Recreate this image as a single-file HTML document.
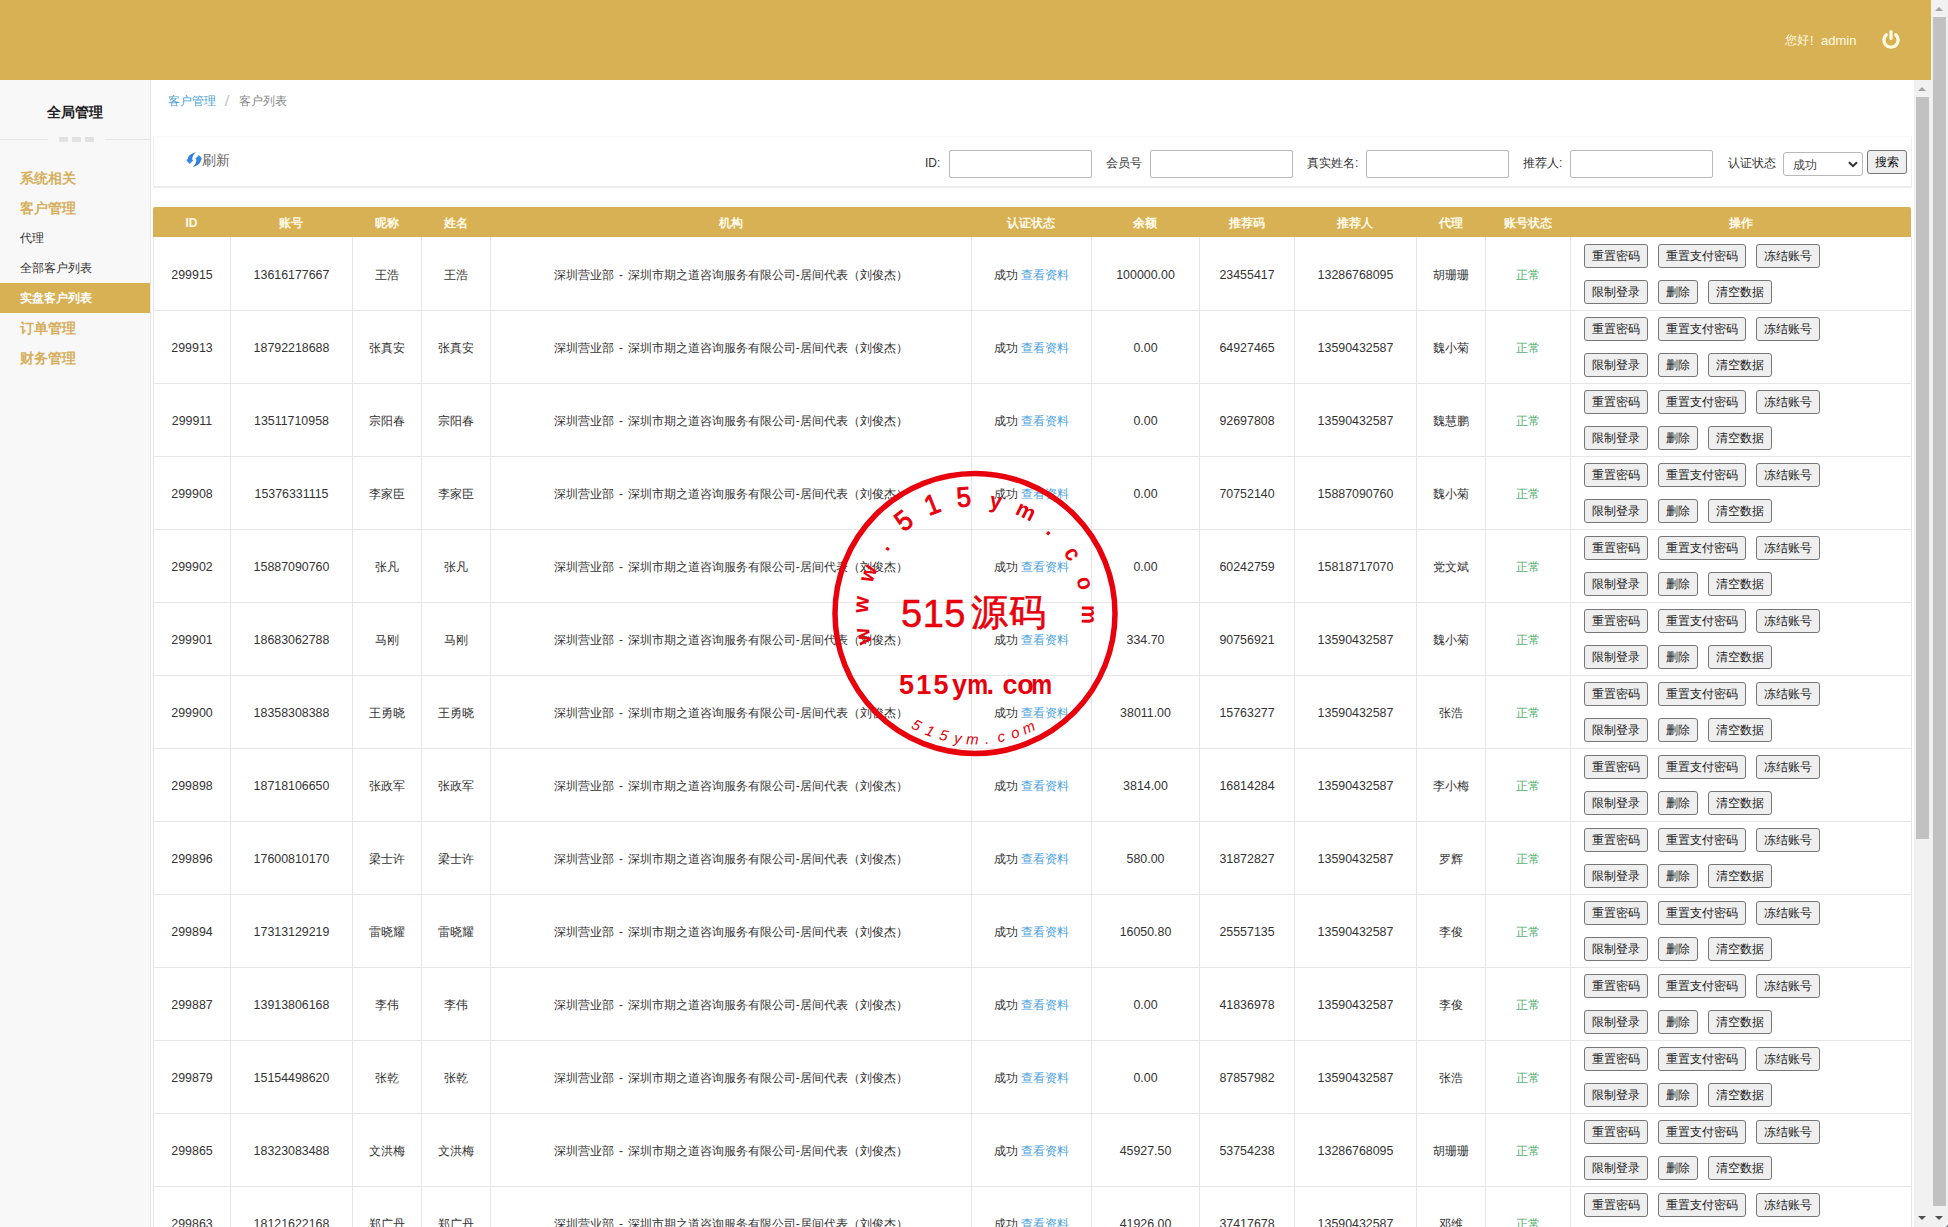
<!DOCTYPE html><html><head><meta charset="utf-8"><title>客户列表</title><style>
*{box-sizing:border-box}
html,body{margin:0;padding:0}
body{width:1948px;height:1227px;overflow:hidden;position:relative;background:#fff;font-family:"Liberation Sans",sans-serif;font-size:12px;color:#333}
#topbar{position:absolute;left:0;top:0;width:1931px;height:80px;background:#d9b155}
#topbar .hello{position:absolute;top:32px;font-size:12px;line-height:16px;color:#fffae0;white-space:nowrap}
#topbar .power{position:absolute;left:1881px;top:30px}
#side{position:absolute;left:0;top:80px;width:151px;height:1147px;background:#f8f8f8;border-right:1px solid #e6e6e6}
.stitle{position:absolute;left:0;top:23px;width:150px;text-align:center;font-size:14px;font-weight:bold;color:#222;line-height:18px}
.sdiv{position:absolute;left:0;top:56px;width:150px;height:6px}
.sdiv i{position:absolute;top:3px;height:1px;background:#e6e6e6}
.sdiv b{position:absolute;top:1px;width:9px;height:5px;background:#e2e2e2}
.mi{position:absolute;left:20px;line-height:30px;height:30px;white-space:nowrap}
.mi.g{color:#d6b060;font-size:14px;font-weight:bold}
.mi.s{color:#333;font-size:12px}
.mi.act{left:0;width:150px;padding-left:20px;background:#d9b155;color:#fff;font-size:12px;font-weight:bold}
#crumb{position:absolute;left:168px;top:93px;line-height:16px;font-size:12px;white-space:nowrap}
#crumb a{color:#4a9fd8}
#crumb .sep{color:#c8c8c8;margin:0 10px 0 9px;font-size:14px;line-height:16px;display:inline-block;vertical-align:top;transform:scaleX(1.3)}
#crumb .cur{color:#888}
#panel{position:absolute;left:153px;top:136px;width:1759px;height:52px;background:#fff;border:1px solid #f0f0f0;border-top-color:#fafafa;border-bottom:2px solid #ececec}
.rficon{position:absolute;left:32px;top:15px}
.rftext{position:absolute;left:48px;top:14px;white-space:nowrap;color:#666;font-size:14px;line-height:18px}
.lbl{position:absolute;top:18px;font-size:12px;line-height:16px;color:#333;white-space:nowrap}
.inp{position:absolute;top:13px;width:143px;height:28px;border:1px solid #b9b9b9;border-radius:2px;background:#fff}
.sel{position:absolute;left:1629px;top:15px;width:80px;height:24px;border:1px solid #b9b9b9;border-radius:3px;background:#fff}
.sel span{position:absolute;left:9px;top:4px;font-size:12px;line-height:16px;color:#444}
.sel svg{position:absolute;left:64px;top:8px}
.sbtn{position:absolute;left:1713px;top:13px;width:40px;height:24px;border:1px solid #767676;border-radius:3px;background:#efefef;font-size:12px;line-height:22px;text-align:center;color:#111}
#thead{position:absolute;background:#d9b155;border-radius:2px 2px 0 0}
.th{position:absolute;top:1px;height:30px;line-height:30px;text-align:center;color:#fffbe8;font-weight:bold;font-size:12px}
.vl{position:absolute;width:1px;background:#e6e6e6}
.hl{position:absolute;height:1px;background:#e6e6e6}
.row{position:absolute;left:0;width:1948px;height:72px}
.td{position:absolute;top:2px;height:72px;line-height:72px;text-align:center;white-space:nowrap;font-size:12px;color:#333}
.td.num{font-size:12.4px}
.td.org{word-spacing:1.5px}
.lk{color:#4aa3df}
.ok{color:#50b070}
.ops{position:absolute;top:0;width:340px;height:72px;padding-left:13px}
.ops .b1,.ops .b2{position:absolute;left:13px;height:24px;white-space:nowrap;font-size:0}
.ops .b1{top:7px}
.ops .b2{top:43px}
.btn{display:inline-block;height:24px;padding:0 7px;margin-right:10px;border:1px solid #767676;border-radius:3px;background:#efefef;font-size:12px;line-height:22px;color:#222;vertical-align:top}
#sb-inner{position:absolute;left:1914px;top:80px;width:17px;height:1147px;background:#f1f1f1}
#sb-outer{position:absolute;left:1931px;top:0;width:17px;height:1227px;background:#f1f1f1}
#hdrline{position:absolute;left:1931px;top:0;width:1px;height:80px;background:#fff3dc;z-index:2}
.thumb{position:absolute;left:2px;width:13px;background:#c1c1c1}
#sb-outer .thumb{left:2px}
.up{position:absolute;left:4px;top:7px;width:0;height:0;border-left:4px solid transparent;border-right:4px solid transparent;border-bottom:4px solid #a3a3a3}
.dn{position:absolute;left:4px;bottom:7px;width:0;height:0;border-left:4px solid transparent;border-right:4px solid transparent;border-top:4px solid #505050}
#stamp{position:absolute;left:0;top:0;pointer-events:none}
#corner{position:absolute;left:9px;top:1219px;width:8px;height:8px;background:#7a8790}
#corner i{position:absolute;left:0;top:0;width:8px;height:8px;background:#f1f1f1;border-bottom-right-radius:8px;box-shadow:1px 1px 0 #fff}

</style></head><body>
<div id="topbar"><span class="hello" style="left:1785px">您好</span><span class="hello" style="left:1810px;top:33px;font-size:13px">!</span><span class="hello" style="left:1821px;top:33px;font-size:13px">admin</span><svg class="power" width="20" height="20" viewBox="0 0 20 20"><path d="M5.3 4.8 A7.1 7.1 0 1 0 14.7 4.8" fill="none" stroke="#fffbe2" stroke-width="3.3" stroke-linecap="round"/><line x1="10" y1="1.6" x2="10" y2="8.4" stroke="#fffbe2" stroke-width="3.2" stroke-linecap="round"/></svg></div>
<div id="side"><div class="stitle">全局管理</div><div class="sdiv"><i style="left:0;width:48px"></i><b style="left:59px"></b><b style="left:72px"></b><b style="left:85px"></b><i style="left:105px;width:45px"></i></div><div class="mi g" style="top:83px">系统相关</div><div class="mi g" style="top:113px">客户管理</div><div class="mi s" style="top:143px">代理</div><div class="mi s" style="top:173px">全部客户列表</div><div class="mi act" style="top:203px">实盘客户列表</div><div class="mi g" style="top:233px">订单管理</div><div class="mi g" style="top:263px">财务管理</div></div>
<div id="crumb"><a>客户管理</a><span class="sep">/</span><span class="cur">客户列表</span></div>
<div id="panel"><svg class="rficon" width="17" height="16" viewBox="-0.3 0 17 16"><defs><linearGradient id="rg" x1="0" y1="0" x2="0" y2="1"><stop offset="0" stop-color="#2a6fd8"/><stop offset="1" stop-color="#3b8ff0"/></linearGradient></defs><path d="M9.7 0.2 C5.5 1.0 1.6 3.6 1.2 7.6 L-0.1 8.1 L3.4 11.9 L7.0 8.3 L5.9 7.6 C5.8 4.6 7.2 2.0 9.7 0.2 Z" fill="url(#rg)"/><path d="M9.7 0.2 C5.5 1.0 1.6 3.6 1.2 7.6 L-0.1 8.1 L3.4 11.9 L7.0 8.3 L5.9 7.6 C5.8 4.6 7.2 2.0 9.7 0.2 Z" fill="url(#rg)" transform="rotate(180 8 7.5)"/></svg><span class="rftext">刷新</span><span class="lbl" style="left:771px">ID:</span><div class="inp" style="left:795px"></div><span class="lbl" style="left:952px">会员号</span><div class="inp" style="left:996px"></div><span class="lbl" style="left:1153px">真实姓名:</span><div class="inp" style="left:1212px"></div><span class="lbl" style="left:1369px">推荐人:</span><div class="inp" style="left:1416px"></div><span class="lbl" style="left:1574px">认证状态</span><div class="sel"><span>成功</span><svg width="10" height="7" viewBox="0 0 10 7"><path d="M1 1.2 L5 5.2 L9 1.2" fill="none" stroke="#333" stroke-width="2"/></svg></div><div class="sbtn">搜索</div></div>
<div id="thead" style="left:153px;top:207px;width:1758px;height:30px">
<div class="th" style="left:0px;width:77px">ID</div>
<div class="th" style="left:77px;width:122px">账号</div>
<div class="th" style="left:199px;width:69px">昵称</div>
<div class="th" style="left:268px;width:69px">姓名</div>
<div class="th" style="left:337px;width:481px">机构</div>
<div class="th" style="left:818px;width:120px">认证状态</div>
<div class="th" style="left:938px;width:108px">余额</div>
<div class="th" style="left:1046px;width:95px">推荐码</div>
<div class="th" style="left:1141px;width:122px">推荐人</div>
<div class="th" style="left:1263px;width:69px">代理</div>
<div class="th" style="left:1332px;width:85px">账号状态</div>
<div class="th" style="left:1417px;width:341px">操作</div>
</div>
<div class="vl" style="left:153px;top:237px;height:990px"></div><div class="vl" style="left:230px;top:237px;height:990px"></div><div class="vl" style="left:352px;top:237px;height:990px"></div><div class="vl" style="left:421px;top:237px;height:990px"></div><div class="vl" style="left:490px;top:237px;height:990px"></div><div class="vl" style="left:971px;top:237px;height:990px"></div><div class="vl" style="left:1091px;top:237px;height:990px"></div><div class="vl" style="left:1199px;top:237px;height:990px"></div><div class="vl" style="left:1294px;top:237px;height:990px"></div><div class="vl" style="left:1416px;top:237px;height:990px"></div><div class="vl" style="left:1485px;top:237px;height:990px"></div><div class="vl" style="left:1570px;top:237px;height:990px"></div><div class="vl" style="left:1911px;top:237px;height:990px"></div><div class="hl" style="left:153px;top:310px;width:1759px"></div><div class="hl" style="left:153px;top:383px;width:1759px"></div><div class="hl" style="left:153px;top:456px;width:1759px"></div><div class="hl" style="left:153px;top:529px;width:1759px"></div><div class="hl" style="left:153px;top:602px;width:1759px"></div><div class="hl" style="left:153px;top:675px;width:1759px"></div><div class="hl" style="left:153px;top:748px;width:1759px"></div><div class="hl" style="left:153px;top:821px;width:1759px"></div><div class="hl" style="left:153px;top:894px;width:1759px"></div><div class="hl" style="left:153px;top:967px;width:1759px"></div><div class="hl" style="left:153px;top:1040px;width:1759px"></div><div class="hl" style="left:153px;top:1113px;width:1759px"></div><div class="hl" style="left:153px;top:1186px;width:1759px"></div>
<div class="row" style="top:237px">
<div class="td num" style="left:154px;width:76px">299915</div>
<div class="td num" style="left:231px;width:121px">13616177667</div>
<div class="td" style="left:353px;width:68px">王浩</div>
<div class="td" style="left:422px;width:68px">王浩</div>
<div class="td org" style="left:491px;width:480px">深圳营业部 - 深圳市期之道咨询服务有限公司-居间代表（刘俊杰）</div>
<div class="td" style="left:972px;width:119px">成功 <a class="lk">查看资料</a></div>
<div class="td num" style="left:1092px;width:107px">100000.00</div>
<div class="td num" style="left:1200px;width:94px">23455417</div>
<div class="td num" style="left:1295px;width:121px">13286768095</div>
<div class="td" style="left:1417px;width:68px">胡珊珊</div>
<div class="td" style="left:1486px;width:84px"><span class="ok">正常</span></div>
<div class="ops" style="left:1571px"><div class="b1"><span class="btn">重置密码</span><span class="btn">重置支付密码</span><span class="btn">冻结账号</span></div><div class="b2"><span class="btn">限制登录</span><span class="btn">删除</span><span class="btn">清空数据</span></div></div>
</div>
<div class="row" style="top:310px">
<div class="td num" style="left:154px;width:76px">299913</div>
<div class="td num" style="left:231px;width:121px">18792218688</div>
<div class="td" style="left:353px;width:68px">张真安</div>
<div class="td" style="left:422px;width:68px">张真安</div>
<div class="td org" style="left:491px;width:480px">深圳营业部 - 深圳市期之道咨询服务有限公司-居间代表（刘俊杰）</div>
<div class="td" style="left:972px;width:119px">成功 <a class="lk">查看资料</a></div>
<div class="td num" style="left:1092px;width:107px">0.00</div>
<div class="td num" style="left:1200px;width:94px">64927465</div>
<div class="td num" style="left:1295px;width:121px">13590432587</div>
<div class="td" style="left:1417px;width:68px">魏小菊</div>
<div class="td" style="left:1486px;width:84px"><span class="ok">正常</span></div>
<div class="ops" style="left:1571px"><div class="b1"><span class="btn">重置密码</span><span class="btn">重置支付密码</span><span class="btn">冻结账号</span></div><div class="b2"><span class="btn">限制登录</span><span class="btn">删除</span><span class="btn">清空数据</span></div></div>
</div>
<div class="row" style="top:383px">
<div class="td num" style="left:154px;width:76px">299911</div>
<div class="td num" style="left:231px;width:121px">13511710958</div>
<div class="td" style="left:353px;width:68px">宗阳春</div>
<div class="td" style="left:422px;width:68px">宗阳春</div>
<div class="td org" style="left:491px;width:480px">深圳营业部 - 深圳市期之道咨询服务有限公司-居间代表（刘俊杰）</div>
<div class="td" style="left:972px;width:119px">成功 <a class="lk">查看资料</a></div>
<div class="td num" style="left:1092px;width:107px">0.00</div>
<div class="td num" style="left:1200px;width:94px">92697808</div>
<div class="td num" style="left:1295px;width:121px">13590432587</div>
<div class="td" style="left:1417px;width:68px">魏慧鹏</div>
<div class="td" style="left:1486px;width:84px"><span class="ok">正常</span></div>
<div class="ops" style="left:1571px"><div class="b1"><span class="btn">重置密码</span><span class="btn">重置支付密码</span><span class="btn">冻结账号</span></div><div class="b2"><span class="btn">限制登录</span><span class="btn">删除</span><span class="btn">清空数据</span></div></div>
</div>
<div class="row" style="top:456px">
<div class="td num" style="left:154px;width:76px">299908</div>
<div class="td num" style="left:231px;width:121px">15376331115</div>
<div class="td" style="left:353px;width:68px">李家臣</div>
<div class="td" style="left:422px;width:68px">李家臣</div>
<div class="td org" style="left:491px;width:480px">深圳营业部 - 深圳市期之道咨询服务有限公司-居间代表（刘俊杰）</div>
<div class="td" style="left:972px;width:119px">成功 <a class="lk">查看资料</a></div>
<div class="td num" style="left:1092px;width:107px">0.00</div>
<div class="td num" style="left:1200px;width:94px">70752140</div>
<div class="td num" style="left:1295px;width:121px">15887090760</div>
<div class="td" style="left:1417px;width:68px">魏小菊</div>
<div class="td" style="left:1486px;width:84px"><span class="ok">正常</span></div>
<div class="ops" style="left:1571px"><div class="b1"><span class="btn">重置密码</span><span class="btn">重置支付密码</span><span class="btn">冻结账号</span></div><div class="b2"><span class="btn">限制登录</span><span class="btn">删除</span><span class="btn">清空数据</span></div></div>
</div>
<div class="row" style="top:529px">
<div class="td num" style="left:154px;width:76px">299902</div>
<div class="td num" style="left:231px;width:121px">15887090760</div>
<div class="td" style="left:353px;width:68px">张凡</div>
<div class="td" style="left:422px;width:68px">张凡</div>
<div class="td org" style="left:491px;width:480px">深圳营业部 - 深圳市期之道咨询服务有限公司-居间代表（刘俊杰）</div>
<div class="td" style="left:972px;width:119px">成功 <a class="lk">查看资料</a></div>
<div class="td num" style="left:1092px;width:107px">0.00</div>
<div class="td num" style="left:1200px;width:94px">60242759</div>
<div class="td num" style="left:1295px;width:121px">15818717070</div>
<div class="td" style="left:1417px;width:68px">党文斌</div>
<div class="td" style="left:1486px;width:84px"><span class="ok">正常</span></div>
<div class="ops" style="left:1571px"><div class="b1"><span class="btn">重置密码</span><span class="btn">重置支付密码</span><span class="btn">冻结账号</span></div><div class="b2"><span class="btn">限制登录</span><span class="btn">删除</span><span class="btn">清空数据</span></div></div>
</div>
<div class="row" style="top:602px">
<div class="td num" style="left:154px;width:76px">299901</div>
<div class="td num" style="left:231px;width:121px">18683062788</div>
<div class="td" style="left:353px;width:68px">马刚</div>
<div class="td" style="left:422px;width:68px">马刚</div>
<div class="td org" style="left:491px;width:480px">深圳营业部 - 深圳市期之道咨询服务有限公司-居间代表（刘俊杰）</div>
<div class="td" style="left:972px;width:119px">成功 <a class="lk">查看资料</a></div>
<div class="td num" style="left:1092px;width:107px">334.70</div>
<div class="td num" style="left:1200px;width:94px">90756921</div>
<div class="td num" style="left:1295px;width:121px">13590432587</div>
<div class="td" style="left:1417px;width:68px">魏小菊</div>
<div class="td" style="left:1486px;width:84px"><span class="ok">正常</span></div>
<div class="ops" style="left:1571px"><div class="b1"><span class="btn">重置密码</span><span class="btn">重置支付密码</span><span class="btn">冻结账号</span></div><div class="b2"><span class="btn">限制登录</span><span class="btn">删除</span><span class="btn">清空数据</span></div></div>
</div>
<div class="row" style="top:675px">
<div class="td num" style="left:154px;width:76px">299900</div>
<div class="td num" style="left:231px;width:121px">18358308388</div>
<div class="td" style="left:353px;width:68px">王勇晓</div>
<div class="td" style="left:422px;width:68px">王勇晓</div>
<div class="td org" style="left:491px;width:480px">深圳营业部 - 深圳市期之道咨询服务有限公司-居间代表（刘俊杰）</div>
<div class="td" style="left:972px;width:119px">成功 <a class="lk">查看资料</a></div>
<div class="td num" style="left:1092px;width:107px">38011.00</div>
<div class="td num" style="left:1200px;width:94px">15763277</div>
<div class="td num" style="left:1295px;width:121px">13590432587</div>
<div class="td" style="left:1417px;width:68px">张浩</div>
<div class="td" style="left:1486px;width:84px"><span class="ok">正常</span></div>
<div class="ops" style="left:1571px"><div class="b1"><span class="btn">重置密码</span><span class="btn">重置支付密码</span><span class="btn">冻结账号</span></div><div class="b2"><span class="btn">限制登录</span><span class="btn">删除</span><span class="btn">清空数据</span></div></div>
</div>
<div class="row" style="top:748px">
<div class="td num" style="left:154px;width:76px">299898</div>
<div class="td num" style="left:231px;width:121px">18718106650</div>
<div class="td" style="left:353px;width:68px">张政军</div>
<div class="td" style="left:422px;width:68px">张政军</div>
<div class="td org" style="left:491px;width:480px">深圳营业部 - 深圳市期之道咨询服务有限公司-居间代表（刘俊杰）</div>
<div class="td" style="left:972px;width:119px">成功 <a class="lk">查看资料</a></div>
<div class="td num" style="left:1092px;width:107px">3814.00</div>
<div class="td num" style="left:1200px;width:94px">16814284</div>
<div class="td num" style="left:1295px;width:121px">13590432587</div>
<div class="td" style="left:1417px;width:68px">李小梅</div>
<div class="td" style="left:1486px;width:84px"><span class="ok">正常</span></div>
<div class="ops" style="left:1571px"><div class="b1"><span class="btn">重置密码</span><span class="btn">重置支付密码</span><span class="btn">冻结账号</span></div><div class="b2"><span class="btn">限制登录</span><span class="btn">删除</span><span class="btn">清空数据</span></div></div>
</div>
<div class="row" style="top:821px">
<div class="td num" style="left:154px;width:76px">299896</div>
<div class="td num" style="left:231px;width:121px">17600810170</div>
<div class="td" style="left:353px;width:68px">梁士许</div>
<div class="td" style="left:422px;width:68px">梁士许</div>
<div class="td org" style="left:491px;width:480px">深圳营业部 - 深圳市期之道咨询服务有限公司-居间代表（刘俊杰）</div>
<div class="td" style="left:972px;width:119px">成功 <a class="lk">查看资料</a></div>
<div class="td num" style="left:1092px;width:107px">580.00</div>
<div class="td num" style="left:1200px;width:94px">31872827</div>
<div class="td num" style="left:1295px;width:121px">13590432587</div>
<div class="td" style="left:1417px;width:68px">罗辉</div>
<div class="td" style="left:1486px;width:84px"><span class="ok">正常</span></div>
<div class="ops" style="left:1571px"><div class="b1"><span class="btn">重置密码</span><span class="btn">重置支付密码</span><span class="btn">冻结账号</span></div><div class="b2"><span class="btn">限制登录</span><span class="btn">删除</span><span class="btn">清空数据</span></div></div>
</div>
<div class="row" style="top:894px">
<div class="td num" style="left:154px;width:76px">299894</div>
<div class="td num" style="left:231px;width:121px">17313129219</div>
<div class="td" style="left:353px;width:68px">雷晓耀</div>
<div class="td" style="left:422px;width:68px">雷晓耀</div>
<div class="td org" style="left:491px;width:480px">深圳营业部 - 深圳市期之道咨询服务有限公司-居间代表（刘俊杰）</div>
<div class="td" style="left:972px;width:119px">成功 <a class="lk">查看资料</a></div>
<div class="td num" style="left:1092px;width:107px">16050.80</div>
<div class="td num" style="left:1200px;width:94px">25557135</div>
<div class="td num" style="left:1295px;width:121px">13590432587</div>
<div class="td" style="left:1417px;width:68px">李俊</div>
<div class="td" style="left:1486px;width:84px"><span class="ok">正常</span></div>
<div class="ops" style="left:1571px"><div class="b1"><span class="btn">重置密码</span><span class="btn">重置支付密码</span><span class="btn">冻结账号</span></div><div class="b2"><span class="btn">限制登录</span><span class="btn">删除</span><span class="btn">清空数据</span></div></div>
</div>
<div class="row" style="top:967px">
<div class="td num" style="left:154px;width:76px">299887</div>
<div class="td num" style="left:231px;width:121px">13913806168</div>
<div class="td" style="left:353px;width:68px">李伟</div>
<div class="td" style="left:422px;width:68px">李伟</div>
<div class="td org" style="left:491px;width:480px">深圳营业部 - 深圳市期之道咨询服务有限公司-居间代表（刘俊杰）</div>
<div class="td" style="left:972px;width:119px">成功 <a class="lk">查看资料</a></div>
<div class="td num" style="left:1092px;width:107px">0.00</div>
<div class="td num" style="left:1200px;width:94px">41836978</div>
<div class="td num" style="left:1295px;width:121px">13590432587</div>
<div class="td" style="left:1417px;width:68px">李俊</div>
<div class="td" style="left:1486px;width:84px"><span class="ok">正常</span></div>
<div class="ops" style="left:1571px"><div class="b1"><span class="btn">重置密码</span><span class="btn">重置支付密码</span><span class="btn">冻结账号</span></div><div class="b2"><span class="btn">限制登录</span><span class="btn">删除</span><span class="btn">清空数据</span></div></div>
</div>
<div class="row" style="top:1040px">
<div class="td num" style="left:154px;width:76px">299879</div>
<div class="td num" style="left:231px;width:121px">15154498620</div>
<div class="td" style="left:353px;width:68px">张乾</div>
<div class="td" style="left:422px;width:68px">张乾</div>
<div class="td org" style="left:491px;width:480px">深圳营业部 - 深圳市期之道咨询服务有限公司-居间代表（刘俊杰）</div>
<div class="td" style="left:972px;width:119px">成功 <a class="lk">查看资料</a></div>
<div class="td num" style="left:1092px;width:107px">0.00</div>
<div class="td num" style="left:1200px;width:94px">87857982</div>
<div class="td num" style="left:1295px;width:121px">13590432587</div>
<div class="td" style="left:1417px;width:68px">张浩</div>
<div class="td" style="left:1486px;width:84px"><span class="ok">正常</span></div>
<div class="ops" style="left:1571px"><div class="b1"><span class="btn">重置密码</span><span class="btn">重置支付密码</span><span class="btn">冻结账号</span></div><div class="b2"><span class="btn">限制登录</span><span class="btn">删除</span><span class="btn">清空数据</span></div></div>
</div>
<div class="row" style="top:1113px">
<div class="td num" style="left:154px;width:76px">299865</div>
<div class="td num" style="left:231px;width:121px">18323083488</div>
<div class="td" style="left:353px;width:68px">文洪梅</div>
<div class="td" style="left:422px;width:68px">文洪梅</div>
<div class="td org" style="left:491px;width:480px">深圳营业部 - 深圳市期之道咨询服务有限公司-居间代表（刘俊杰）</div>
<div class="td" style="left:972px;width:119px">成功 <a class="lk">查看资料</a></div>
<div class="td num" style="left:1092px;width:107px">45927.50</div>
<div class="td num" style="left:1200px;width:94px">53754238</div>
<div class="td num" style="left:1295px;width:121px">13286768095</div>
<div class="td" style="left:1417px;width:68px">胡珊珊</div>
<div class="td" style="left:1486px;width:84px"><span class="ok">正常</span></div>
<div class="ops" style="left:1571px"><div class="b1"><span class="btn">重置密码</span><span class="btn">重置支付密码</span><span class="btn">冻结账号</span></div><div class="b2"><span class="btn">限制登录</span><span class="btn">删除</span><span class="btn">清空数据</span></div></div>
</div>
<div class="row" style="top:1186px">
<div class="td num" style="left:154px;width:76px">299863</div>
<div class="td num" style="left:231px;width:121px">18121622168</div>
<div class="td" style="left:353px;width:68px">郑广丹</div>
<div class="td" style="left:422px;width:68px">郑广丹</div>
<div class="td org" style="left:491px;width:480px">深圳营业部 - 深圳市期之道咨询服务有限公司-居间代表（刘俊杰）</div>
<div class="td" style="left:972px;width:119px">成功 <a class="lk">查看资料</a></div>
<div class="td num" style="left:1092px;width:107px">41926.00</div>
<div class="td num" style="left:1200px;width:94px">37417678</div>
<div class="td num" style="left:1295px;width:121px">13590432587</div>
<div class="td" style="left:1417px;width:68px">邓维</div>
<div class="td" style="left:1486px;width:84px"><span class="ok">正常</span></div>
<div class="ops" style="left:1571px"><div class="b1"><span class="btn">重置密码</span><span class="btn">重置支付密码</span><span class="btn">冻结账号</span></div><div class="b2"><span class="btn">限制登录</span><span class="btn">删除</span><span class="btn">清空数据</span></div></div>
</div>
<div id="sb-inner"><div class="up"></div><div class="thumb" style="top:17px;height:742px"></div><div class="dn"></div></div>
<div id="hdrline"></div><div id="sb-outer"><div id="corner"><i></i></div><div class="up"></div><div class="thumb" style="top:17px;height:1189px"></div><div class="dn"></div></div>
<svg id="stamp" width="1948" height="1227" viewBox="0 0 1948 1227"><circle cx="975" cy="613.5" r="140" fill="none" stroke="#e8000c" stroke-width="5.5"/><g fill="#e8000c" font-family="Liberation Sans"><text font-size="28" font-weight="bold" text-anchor="middle" transform="translate(975,613.5) rotate(-101.50) translate(0,-107) scale(0.76,0.8)">w</text><text font-size="28" font-weight="bold" text-anchor="middle" transform="translate(975,613.5) rotate(-85.50) translate(0,-107) scale(0.76,0.8)">w</text><text font-size="28" font-weight="bold" text-anchor="middle" transform="translate(975,613.5) rotate(-69.50) translate(0,-107) scale(0.76,0.8)">w</text><text font-size="28" font-weight="bold" text-anchor="middle" transform="translate(975,613.5) rotate(-53.50) translate(0,-107) scale(0.76,0.8)">.</text><text font-size="28" stroke="#e8000c" stroke-width="0.9" text-anchor="middle" transform="translate(975,613.5) rotate(-37.50) translate(0,-107.5) scale(0.92,1)">5</text><text font-size="28" stroke="#e8000c" stroke-width="0.9" text-anchor="middle" transform="translate(975,613.5) rotate(-21.50) translate(0,-107.5) scale(0.92,1)">1</text><text font-size="28" stroke="#e8000c" stroke-width="0.9" text-anchor="middle" transform="translate(975,613.5) rotate(-5.50) translate(0,-107.5) scale(0.92,1)">5</text><text font-size="28" font-weight="bold" text-anchor="middle" transform="translate(975,613.5) rotate(10.50) translate(0,-107) scale(0.76,0.8)">y</text><text font-size="28" font-weight="bold" text-anchor="middle" transform="translate(975,613.5) rotate(26.50) translate(0,-107) scale(0.76,0.8)">m</text><text font-size="28" font-weight="bold" text-anchor="middle" transform="translate(975,613.5) rotate(42.50) translate(0,-107) scale(0.76,0.8)">.</text><text font-size="28" font-weight="bold" text-anchor="middle" transform="translate(975,613.5) rotate(58.50) translate(0,-107) scale(0.76,0.8)">c</text><text font-size="28" font-weight="bold" text-anchor="middle" transform="translate(975,613.5) rotate(74.50) translate(0,-107) scale(0.76,0.8)">o</text><text font-size="28" font-weight="bold" text-anchor="middle" transform="translate(975,613.5) rotate(90.50) translate(0,-107) scale(0.76,0.8)">m</text><text font-size="15" font-style="italic" text-anchor="middle" transform="translate(975,613.5) rotate(27.60) translate(0,131)">5</text><text font-size="15" font-style="italic" text-anchor="middle" transform="translate(975,613.5) rotate(21.00) translate(0,131)">1</text><text font-size="15" font-style="italic" text-anchor="middle" transform="translate(975,613.5) rotate(14.40) translate(0,131)">5</text><text font-size="15" font-style="italic" text-anchor="middle" transform="translate(975,613.5) rotate(7.80) translate(0,131)">y</text><text font-size="15" font-style="italic" text-anchor="middle" transform="translate(975,613.5) rotate(1.20) translate(0,131)">m</text><text font-size="15" font-style="italic" text-anchor="middle" transform="translate(975,613.5) rotate(-5.40) translate(0,131)">.</text><text font-size="15" font-style="italic" text-anchor="middle" transform="translate(975,613.5) rotate(-12.00) translate(0,131)">c</text><text font-size="15" font-style="italic" text-anchor="middle" transform="translate(975,613.5) rotate(-18.60) translate(0,131)">o</text><text font-size="15" font-style="italic" text-anchor="middle" transform="translate(975,613.5) rotate(-25.20) translate(0,131)">m</text><text x="901" y="626.5" font-size="38" stroke="#e8000c" stroke-width="0.5" letter-spacing="0.5">515</text><text x="971" y="625" font-size="37" font-family="Liberation Serif" font-weight="normal" stroke="#e8000c" stroke-width="0.6" textLength="75">源码</text><text x="906.6" y="693.5" font-size="27" font-weight="bold" text-anchor="middle">5</text><text x="923.8" y="693.5" font-size="27" font-weight="bold" text-anchor="middle">1</text><text x="940.9" y="693.5" font-size="27" font-weight="bold" text-anchor="middle">5</text><text x="959.4" y="693.5" font-size="27" font-weight="bold" text-anchor="middle">y</text><text font-size="27" font-weight="bold" text-anchor="middle" transform="translate(977.6,693.5) scale(0.87,1)">m</text><text x="990.3" y="693.5" font-size="27" font-weight="bold" text-anchor="middle">.</text><text x="1009.9" y="693.5" font-size="27" font-weight="bold" text-anchor="middle">c</text><text x="1025.4" y="693.5" font-size="27" font-weight="bold" text-anchor="middle">o</text><text font-size="27" font-weight="bold" text-anchor="middle" transform="translate(1041.8,693.5) scale(0.87,1)">m</text></g></svg>
</body></html>
